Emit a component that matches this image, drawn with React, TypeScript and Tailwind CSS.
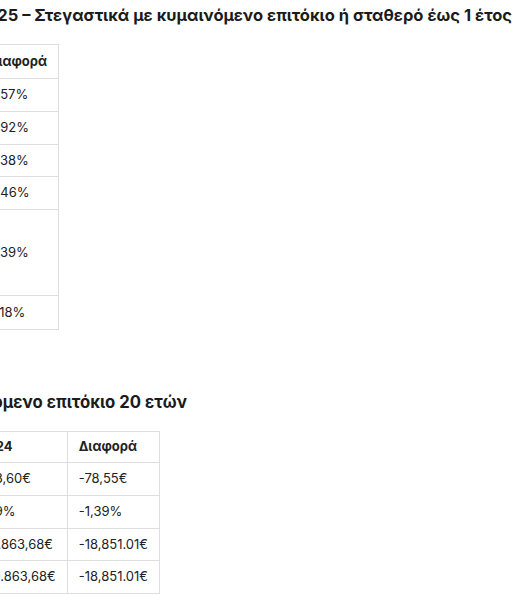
const table1 = [
  { bank: "Εθνική Τράπεζα", a: "4,12%", b: "3,55%", diff: "-0,57%", h: "h-[33px]" },
  { bank: "Πειραιώς", a: "4,80%", b: "3,88%", diff: "-0,92%", h: "h-[33px]" },
  { bank: "Eurobank", a: "4,21%", b: "3,83%", diff: "-0,38%", h: "h-[32px]" },
  { bank: "Alpha Bank", a: "4,35%", b: "3,89%", diff: "-0,46%", h: "h-[33px]" },
  { bank: "Attica Bank", a: "4,60%", b: "4,21%", diff: "-0,39%", h: "h-[86px]" },
  { bank: "Optima", a: "4,50%", b: "4,32%", diff: "-0,18%", h: "h-[34px]" },
];

const table2 = [
  { label: "Μηνιαία δόση", a: "545,05€", b: "623,60€", diff: "-78,55€" },
  { label: "Επιτόκιο", a: "2,80%", b: "4,19%", diff: "-1,39%" },
  { label: "Συνολικό κόστος", a: "130.812,67€", b: "141.863,68€", diff: "-18,851.01€" },
  { label: "Σύνολο πληρωμών", a: "130.812,67€", b: "149.863,68€", diff: "-18,851.01€" },
];

const cell = "border border-[#dedede] px-[11px] text-left align-middle whitespace-nowrap";

export default function App() {
  return (
    <div className="w-[530px] h-[608px] overflow-hidden bg-white text-[#222] font-['Inter','Noto_Sans',sans-serif]">
      <div className="flex justify-end pr-[18px] pt-[2px]">
        <h3 className="whitespace-nowrap text-[16.5px] leading-[26px] font-bold text-[#1b1b1b]">
          2025 – Στεγαστικά με κυμαινόμενο επιτόκιο ή σταθερό έως 1 έτος
        </h3>
      </div>

      <div className="w-[59px] flex justify-end mt-[16px]">
        <table className="shrink-0 border-collapse text-[13px]">
          <thead>
            <tr className="h-[34px]">
              <th className={`${cell} w-[140px] font-bold`}>Τράπεζα</th>
              <th className={`${cell} w-[90px] font-bold`}>2024</th>
              <th className={`${cell} w-[90px] font-bold`}>2025</th>
              <th className={`${cell} w-[79px] font-bold`}>Διαφορά</th>
            </tr>
          </thead>
          <tbody>
            {table1.map((r) => (
              <tr key={r.bank} className={r.h}>
                <td className={cell}>{r.bank}</td>
                <td className={cell}>{r.a}</td>
                <td className={cell}>{r.b}</td>
                <td className={cell}>
                  <span className="-ml-[6px]">{r.diff}</span>
                </td>
              </tr>
            ))}
          </tbody>
        </table>
      </div>

      <div className="w-[187px] flex justify-end mt-[59px]">
        <h3 className="whitespace-nowrap text-[16.7px] leading-[26px] font-bold text-[#1b1b1b]">
          Στεγαστικό με κυμαινόμενο επιτόκιο 20 ετών
        </h3>
      </div>

      <div className="w-[160px] flex justify-end mt-[16px]">
        <table className="shrink-0 border-collapse text-[13px]">
          <thead>
            <tr className="h-[31px]">
              <th className={`${cell} w-[150px] font-bold`}></th>
              <th className={`${cell} w-[100px] font-bold`}>2025</th>
              <th className={`${cell} w-[95px] font-bold`}>2024</th>
              <th className={`${cell} w-[91px] font-bold`}>Διαφορά</th>
            </tr>
          </thead>
          <tbody>
            {table2.map((r, i) => (
              <tr key={r.label} className={i === 2 ? "h-[32px]" : "h-[33px]"}>
                <td className={cell}>{r.label}</td>
                <td className={cell}>{r.a}</td>
                <td className={cell}>{r.b}</td>
                <td className={cell}>{r.diff}</td>
              </tr>
            ))}
          </tbody>
        </table>
      </div>
    </div>
  );
}
